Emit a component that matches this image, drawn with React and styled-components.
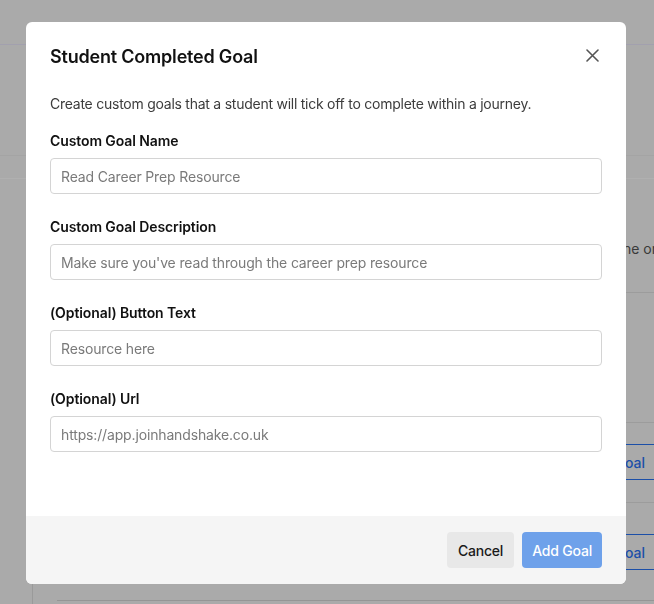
import React from 'react';
import styled, { createGlobalStyle } from 'styled-components';

const GlobalStyle = createGlobalStyle`
  * { box-sizing: border-box; }
  html, body {
    margin: 0;
    padding: 0;
    background: #aaaaaa;
    font-family: Inter, "Liberation Sans", sans-serif;
  }
`;

// dimmed page behind the modal
const Page = styled.div`
  width: 654px;
  height: 604px;
  overflow: hidden;
  background: #aaaaaa;
  display: flex;
  flex-direction: column;
`;
const TopBar = styled.div`
  height: 45px;
  border-bottom: 1px solid #a2a0ae;
  flex-shrink: 0;
`;
const SubBar = styled.div`
  height: 111px;
  border-bottom: 1px solid #a4a4a4;
  flex-shrink: 0;
`;
const Strip = styled.div`
  height: 23px;
  border-bottom: 1px solid #b0b0b0;
  flex-shrink: 0;
`;
const Content = styled.div`
  flex: 1;
  display: flex;
`;
const SideRail = styled.div`
  width: 33px;
  border-right: 1px solid #9a9a9a;
  margin-top: 404px;
`;
const Main = styled.div`
  flex: 1;
  display: flex;
  flex-direction: column;
  align-items: flex-end;
`;
const BgText = styled.div`
  width: 28px;
  margin-top: 60px;
  font-size: 14px;
  line-height: 20px;
  color: #3a3a3a;
  white-space: nowrap;
  overflow: hidden;
  text-indent: -3px;
`;
const BgRule = styled.div`
  width: 28px;
  height: 1px;
  background: #9c9c9c;
  margin-top: ${(p) => p.$top}px;
`;
const BgButton = styled.div`
  width: 28px;
  height: 36px;
  margin-top: ${(p) => p.$top}px;
  border-top: 1px solid #1c4fa8;
  border-bottom: 1px solid #1c4fa8;
  color: #1c4fa8;
  font-size: 14px;
  font-weight: 500;
  display: flex;
  align-items: center;
  white-space: nowrap;
  overflow: hidden;
  text-indent: -1px;
`;
const BottomRule = styled.div`
  margin-top: auto;
  margin-left: 24px;
  align-self: stretch;
  height: 4px;
  border-top: 1px solid #959595;
`;

// modal
const Overlay = styled.div`
  position: fixed;
  inset: 0;
  display: flex;
  justify-content: flex-start;
  align-items: flex-start;
  padding: 22px 0 0 26px;
`;
const Modal = styled.div`
  width: 600px;
  height: 562px;
  background: #fff;
  border-radius: 6px;
  display: flex;
  flex-direction: column;
  overflow: hidden;
`;
const Header = styled.div`
  display: flex;
  justify-content: space-between;
  align-items: flex-start;
  padding: 23px 24px 0 24px;
  height: 72px;
`;
const Title = styled.h2`
  margin: 0;
  font-size: 18px;
  font-weight: 600;
  color: #111;
  letter-spacing: -0.2px;
  line-height: 24px;
`;
const CloseButton = styled.button`
  border: none;
  background: none;
  padding: 0;
  width: 16px;
  height: 16px;
  margin-top: 2px;
  margin-right: 2px;
  display: flex;
  align-items: center;
  justify-content: center;
  cursor: pointer;
`;
const Body = styled.div`
  flex: 1;
  padding: 0 24px;
`;
const Intro = styled.p`
  margin: 0 0 17px 0;
  font-size: 14px;
  line-height: 20px;
  letter-spacing: -0.25px;
  color: #3c3c3c;
`;
const Field = styled.div`
  display: flex;
  flex-direction: column;
  margin-bottom: 23px;
`;
const Label = styled.label`
  font-size: 14px;
  font-weight: 600;
  line-height: 20px;
  letter-spacing: -0.1px;
  color: #111;
  margin-bottom: 7px;
`;
const Input = styled.input`
  height: 36px;
  border: 1px solid #d4d4d4;
  border-radius: 4px;
  padding: 0 10px;
  font-family: inherit;
  font-size: 14px;
  letter-spacing: -0.15px;
  color: #222;
  outline: none;
  &::placeholder {
    color: #7a7a7a;
  }
`;
const Footer = styled.div`
  background: #f5f5f5;
  height: 68px;
  padding: 16px 24px;
  display: flex;
  justify-content: flex-end;
  gap: 8px;
`;
const Button = styled.button`
  height: 36px;
  padding: 0 ${(p) => (p.$primary ? 10 : 11)}px;
  border: none;
  border-radius: 4px;
  font-family: inherit;
  font-size: 14px;
  font-weight: 500;
  letter-spacing: -0.2px;
  background: ${(p) => (p.$primary ? '#6ea1ea' : '#e8e8e8')};
  color: ${(p) => (p.$primary ? '#fff' : '#1a1a1a')};
  cursor: pointer;
`;

const fields = [
  { label: 'Custom Goal Name', placeholder: 'Read Career Prep Resource' },
  {
    label: 'Custom Goal Description',
    placeholder: "Make sure you've read through the career prep resource",
  },
  { label: '(Optional) Button Text', placeholder: 'Resource here' },
  { label: '(Optional) Url', placeholder: 'https://app.joinhandshake.co.uk' },
];

const App = () => {
  return (
    <>
      <GlobalStyle />
      <Page>
        <TopBar />
        <SubBar />
        <Strip />
        <Content>
          <SideRail />
          <Main>
            <BgText>ne or</BgText>
            <BgRule $top={33} />
            <BgRule $top={129} />
            <BgButton $top={21}>oal</BgButton>
            <BgRule $top={22} />
            <BgButton $top={31}>oal</BgButton>
            <BottomRule />
          </Main>
        </Content>
      </Page>

      <Overlay>
        <Modal>
          <Header>
            <Title>Student Completed Goal</Title>
            <CloseButton aria-label="Close">
              <svg width="13" height="13" viewBox="0 0 13 13">
                <path
                  d="M1 1 L12 12 M12 1 L1 12"
                  stroke="#555"
                  strokeWidth="1.6"
                  strokeLinecap="round"
                />
              </svg>
            </CloseButton>
          </Header>
          <Body>
            <Intro>
              Create custom goals that a student will tick off to complete
              within a journey.
            </Intro>
            {fields.map((f) => (
              <Field key={f.label}>
                <Label>{f.label}</Label>
                <Input placeholder={f.placeholder} />
              </Field>
            ))}
          </Body>
          <Footer>
            <Button>Cancel</Button>
            <Button $primary>Add Goal</Button>
          </Footer>
        </Modal>
      </Overlay>
    </>
  );
};

export default App;
